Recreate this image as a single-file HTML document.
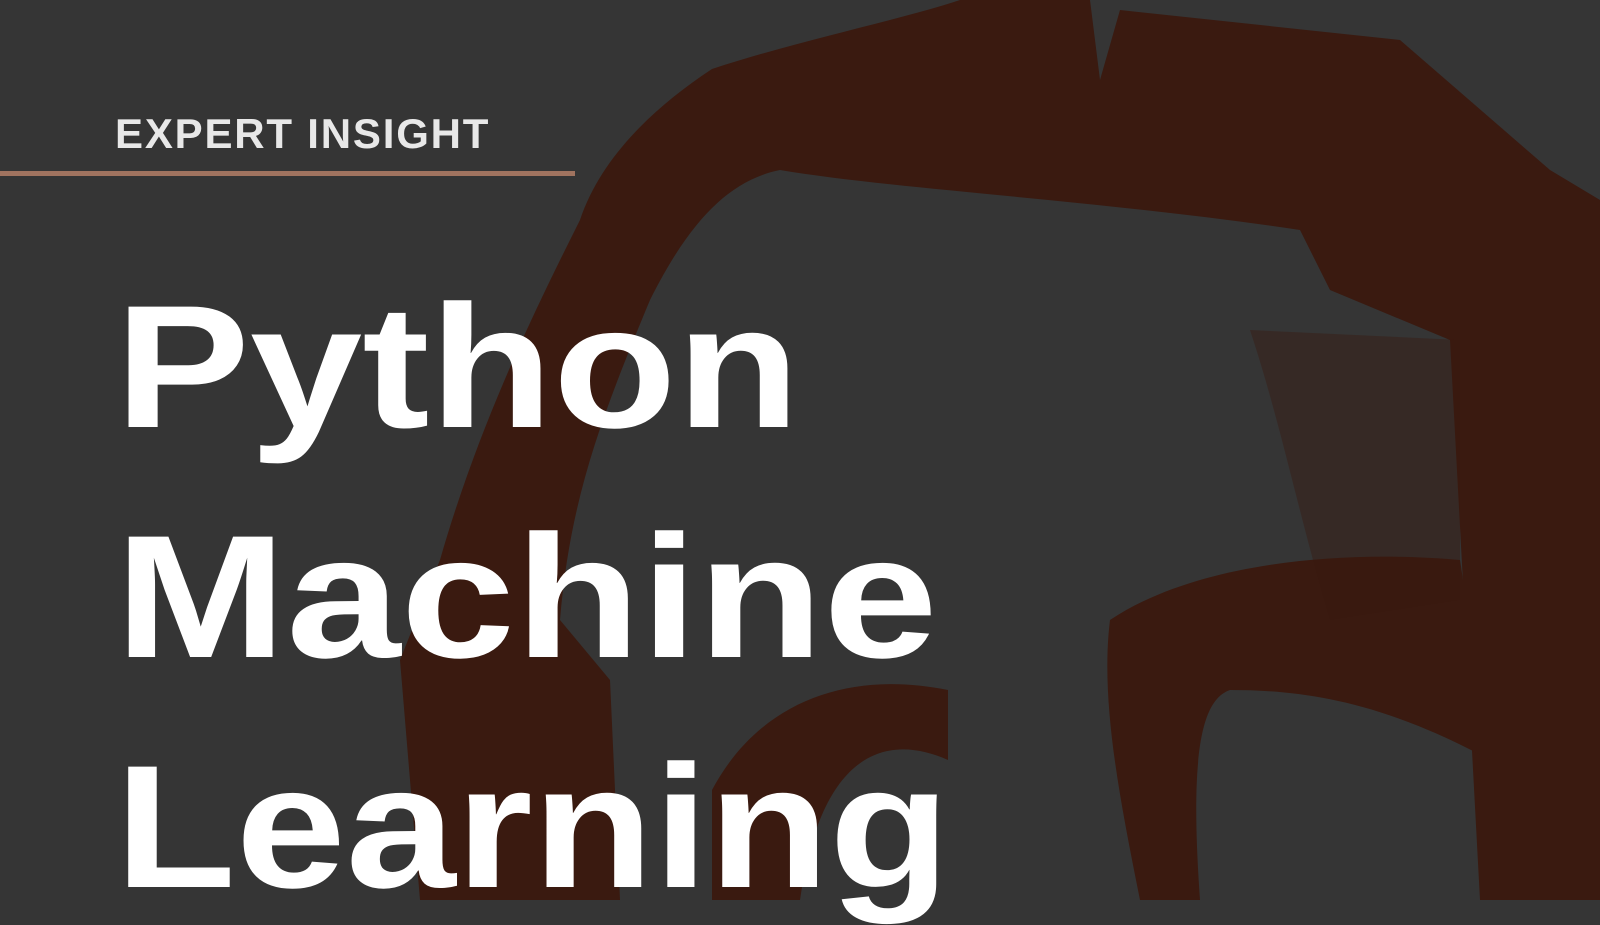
<!DOCTYPE html>
<html><head><meta charset="utf-8"><style>
html,body{margin:0;padding:0;}
body{width:1600px;height:900px;background:#353535;position:relative;overflow:hidden;font-family:"Liberation Sans",sans-serif;}
svg{position:absolute;left:0;top:0;}
.t{position:absolute;left:115px;color:#fff;font-weight:bold;font-size:175px;line-height:175px;white-space:nowrap;transform-origin:0 0;}
.ei{position:absolute;left:115px;top:113px;font-size:42px;line-height:42px;font-weight:bold;color:#e8e8e8;letter-spacing:1.8px;white-space:nowrap;}
.rule{position:absolute;left:0;top:171px;width:575px;height:5px;background:#a0735f;}
</style></head><body>
<svg width="1600" height="900" viewBox="0 0 1600 900">
<g fill="#3a1a10">
<path d="M712 69 C650 110 600 160 580 220 C540 300 480 420 440 560 L400 660 L420 900 L620 900 L610 680 L560 620 C570 500 600 420 650 300 C690 220 730 180 780 170 C900 190 1100 200 1300 230 L1330 290 L1450 340 L1480 900 L1600 900 L1600 200 L1550 170 L1400 40 L1120 10 L1100 80 L1090 0 L960 0 C900 20 800 40 712 69 Z"/>
<path d="M1110 620 C1200 560 1350 550 1460 560 L1490 760 C1380 700 1300 690 1230 690 C1200 700 1190 760 1200 900 L1140 900 C1120 800 1100 700 1110 620 Z"/>
<path d="M712 790 C760 700 850 670 948 690 L948 760 C880 730 820 760 800 900 L712 900 Z"/>
</g>
<g fill="#3a1a10" opacity="0.4">
<path d="M1250 330 L1460 340 L1460 600 L1330 620 C1300 520 1280 420 1250 330 Z"/>
</g>
</svg>
<div class="ei">EXPERT INSIGHT</div>
<div class="rule"></div>
<div class="t" style="top:280px;transform:scaleX(1.155);">Python</div>
<div class="t" style="top:510px;transform:scaleX(1.175);">Machine</div>
<div class="t" style="top:740px;transform:scaleX(1.13);">Learning</div>
</body></html>
